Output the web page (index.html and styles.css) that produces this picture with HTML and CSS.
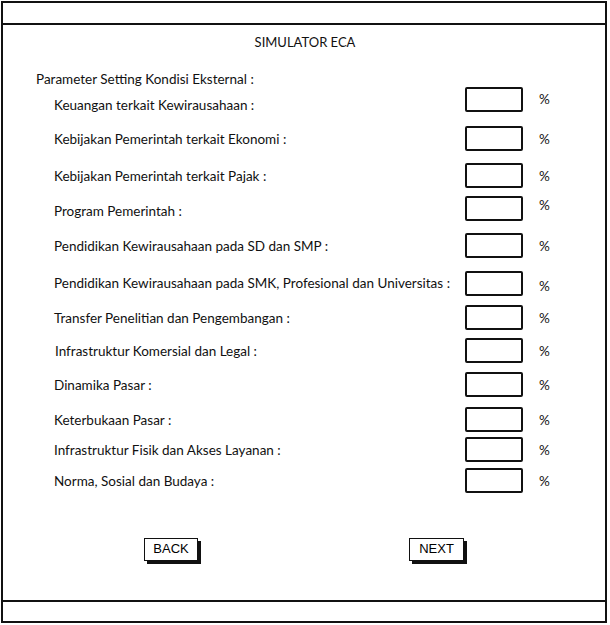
FILE: index.html
```html
<!DOCTYPE html>
<html>
<head>
<meta charset="utf-8">
<link rel="stylesheet" href="styles.css">
</head>
<body>
<div class="frame">
  <div class="topbar"></div>
  <div class="content">
    <div class="title">SIMULATOR ECA</div>
    <div class="heading">Parameter Setting Kondisi Eksternal :</div>
    <div class="rows">
      <div class="row r1"><span class="label">Keuangan terkait Kewirausahaan :</span><span class="box"></span><span class="pct">%</span></div>
      <div class="row r2"><span class="label">Kebijakan Pemerintah terkait Ekonomi :</span><span class="box"></span><span class="pct">%</span></div>
      <div class="row r3"><span class="label">Kebijakan Pemerintah terkait Pajak :</span><span class="box"></span><span class="pct">%</span></div>
      <div class="row r4"><span class="label">Program Pemerintah :</span><span class="box"></span><span class="pct">%</span></div>
      <div class="row r5"><span class="label">Pendidikan Kewirausahaan pada SD dan SMP :</span><span class="box"></span><span class="pct">%</span></div>
      <div class="row r6"><span class="label">Pendidikan Kewirausahaan pada SMK, Profesional dan Universitas :</span><span class="box"></span><span class="pct">%</span></div>
      <div class="row r7"><span class="label">Transfer Penelitian dan Pengembangan :</span><span class="box"></span><span class="pct">%</span></div>
      <div class="row r8"><span class="label">Infrastruktur Komersial dan Legal :</span><span class="box"></span><span class="pct">%</span></div>
      <div class="row r9"><span class="label">Dinamika Pasar :</span><span class="box"></span><span class="pct">%</span></div>
      <div class="row r10"><span class="label">Keterbukaan Pasar :</span><span class="box"></span><span class="pct">%</span></div>
      <div class="row r11"><span class="label">Infrastruktur Fisik dan Akses Layanan :</span><span class="box"></span><span class="pct">%</span></div>
      <div class="row r12"><span class="label">Norma, Sosial dan Budaya :</span><span class="box"></span><span class="pct">%</span></div>
    </div>
    <div class="buttons">
      <span class="btn back">BACK</span>
      <span class="btn next">NEXT</span>
    </div>
  </div>
  <div class="bottombar"></div>
</div>
</body>
</html>
```
FILE: styles.css
```css
html, body {
  margin: 0;
  padding: 0;
  background: #fff;
}
body {
  font-family: "Lato", "Open Sans", sans-serif;
  font-size: 13.5px;
  color: #111;
}
.frame {
  box-sizing: border-box;
  margin: 1px 0 0 1px;
  width: 606px;
  height: 622px;
  border: 2px solid #111;
  display: flex;
  flex-direction: column;
}
.topbar {
  height: 20px;
  border-bottom: 2px solid #111;
  flex: none;
}
.content {
  flex: 1;
  position: relative;
}
.bottombar {
  height: 19px;
  border-top: 2px solid #111;
  flex: none;
}
.title {
  text-align: center;
  margin-top: 9px;
  height: 16px;
  line-height: 16px;
  padding-left: 2px;
  font-size: 13px;
}
.heading {
  margin-top: 21px;
  margin-left: 33px;
  height: 16px;
  line-height: 16px;
}
.rows {
  display: flex;
  flex-direction: column;
}
.row {
  display: flex;
  align-items: center;
  height: 25px;
}
.label {
  width: 411px;
  padding-left: 51px;
  line-height: 16px;
  white-space: nowrap;
}
.box {
  box-sizing: border-box;
  width: 58px;
  height: 25px;
  border: 2px solid #111;
  border-radius: 2px;
  flex: none;
}
.pct {
  margin-left: 16px;
  line-height: 16px;
}
.r1 { margin-top: 0; }
.r1 .label { position: relative; top: 5px; }
.r1 .pct { position: relative; top: -1px; }
.r2 { margin-top: 14px; }
.r3 { margin-top: 12px; }
.r4 { margin-top: 8px; }
.r4 .label { position: relative; top: 2px; }
.r4 .pct { position: relative; top: -4px; }
.r5 { margin-top: 12px; }
.r6 { margin-top: 13px; }
.r6 .label { position: relative; top: -1px; }
.r6 .pct { position: relative; top: 2px; }
.r7 { margin-top: 9px; }
.r8 { margin-top: 8px; }
.r8 .label { padding-left: 52px; width: 410px; }
.r9 { margin-top: 9px; }
.r10 { margin-top: 10px; }
.r11 { margin-top: 5px; }
.r12 { margin-top: 6px; }
.buttons {
  display: flex;
  margin-top: 45px;
  padding-left: 141px;
}
.btn {
  box-sizing: border-box;
  height: 23px;
  border: 1.5px solid #111;
  box-shadow: 3px 3px 0 #111;
  font-family: "Liberation Sans", Arial, sans-serif;
  font-size: 13px;
  line-height: 20px;
  text-align: center;
  color: #000;
}
.back { width: 54px; }
.next { width: 55px; margin-left: 211px; }
```
